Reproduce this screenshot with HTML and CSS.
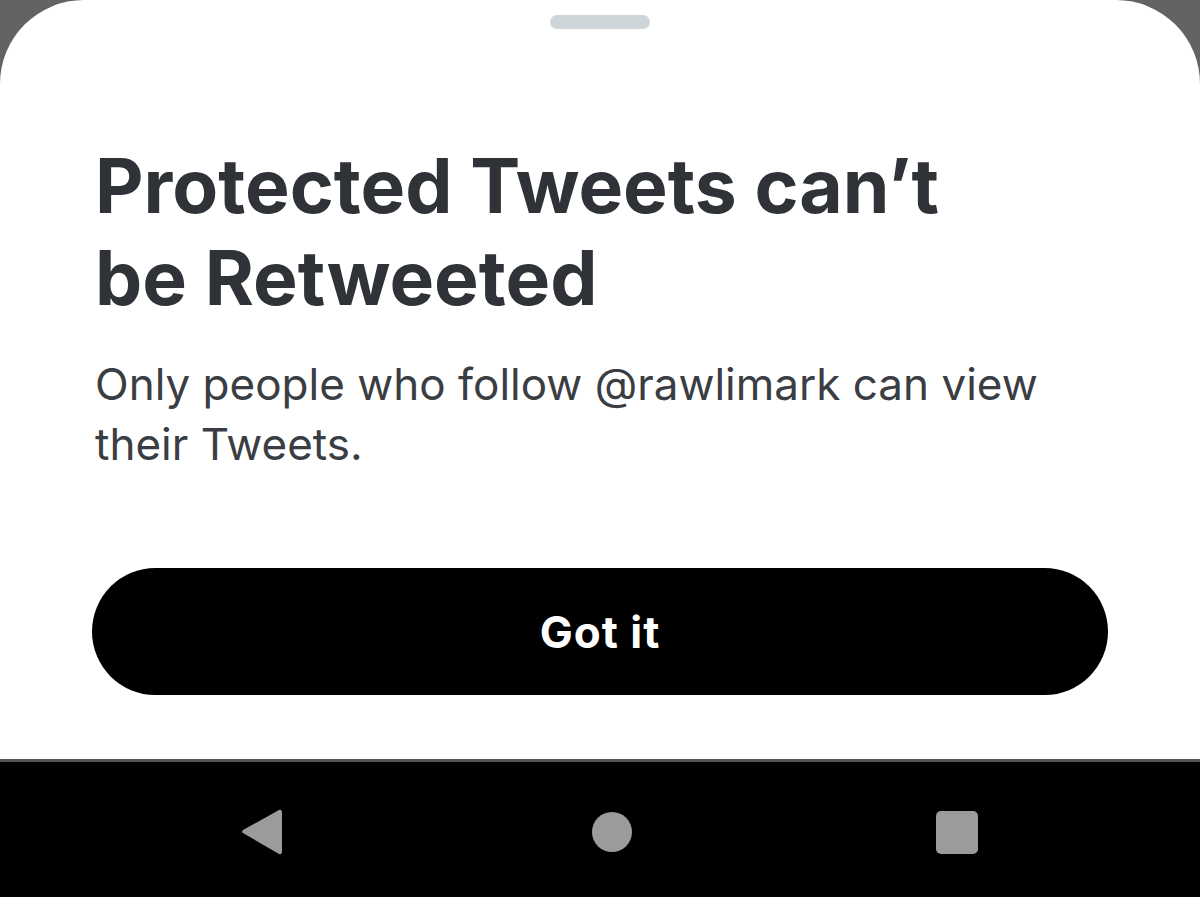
FILE: index.html
```html
<!DOCTYPE html>
<html lang="en">
<head>
<meta charset="utf-8">
<title>Protected Tweets</title>
<link rel="stylesheet" href="styles.css">
</head>
<body>
<div class="screen">
  <div class="sheet">
    <div class="handle"></div>
    <h1 class="title">Protected Tweets can’t be Retweeted</h1>
    <p class="desc">Only people who follow @rawlimark can view their Tweets.</p>
    <button class="btn">Got it</button>
  </div>
  <nav class="navbar">
    <svg class="nav-icon" width="42" height="48" viewBox="0 0 42 48"><path d="M38 2 Q41 1 41 5 L41 43 Q41 47 38 46 L2 25 Q0 24 2 22 Z" fill="#9b9b9b"/></svg>
    <span class="home"></span>
    <span class="recent"></span>
  </nav>
</div>
</body>
</html>
```
FILE: styles.css
```css
html, body {
  margin: 0;
  padding: 0;
}
body {
  background: #636363;
  font-family: Inter, "Noto Sans", sans-serif;
}
.screen {
  width: 1200px;
  height: 897px;
  display: flex;
  flex-direction: column;
}
.sheet {
  height: 759px;
  background: #ffffff;
  border-radius: 84px 84px 0 0;
  box-sizing: border-box;
  padding: 15px 92px 0 92px;
  display: flex;
  flex-direction: column;
}
.handle {
  align-self: center;
  width: 100px;
  height: 14px;
  border-radius: 7px;
  background: #cfd6da;
}
.title {
  margin: 111px 0 0 3px;
  max-width: 900px;
  font-size: 75px;
  line-height: 92px;
  font-weight: 700;
  color: #2f3237;
  letter-spacing: 0;
}
.desc {
  margin: 30px 0 0 3px;
  max-width: 980px;
  font-size: 44px;
  line-height: 60px;
  font-weight: 400;
  color: #3a3d42;
  letter-spacing: 0;
}
.btn {
  margin-top: 94px;
  height: 127px;
  border: none;
  border-radius: 64px;
  background: #000;
  color: #fff;
  font-family: Inter, "Noto Sans", sans-serif;
  font-size: 44px;
  font-weight: 700;
  letter-spacing: 1px;
}
.navbar {
  flex: 1;
  background: #000;
  border-top: 3px solid #555;
  display: flex;
  align-items: center;
  padding-top: 5px;
  box-sizing: border-box;
}
.nav-icon {
  margin-left: 241px;
}
.home {
  margin-left: 309px;
  width: 40px;
  height: 40px;
  border-radius: 50%;
  background: #9b9b9b;
}
.recent {
  margin-left: 304px;
  width: 42px;
  height: 43px;
  border-radius: 5px;
  background: #9b9b9b;
}
```
